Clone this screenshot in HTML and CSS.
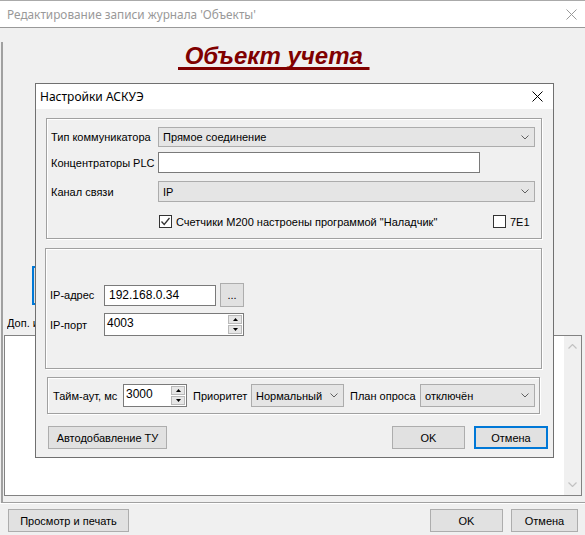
FILE: index.html
```html
<!DOCTYPE html>
<html lang="ru">

<head>
    <meta charset="UTF-8" />
    <title>Редактирование записи журнала 'Объекты'</title>
    <link rel="stylesheet" href="styles.css">
</head>

<body>
    <div class="window">
        <!-- Main window title -->
        <div class="titlebar">
            <span class="title">Редактирование записи журнала 'Объекты'</span>
            <svg class="close close-gray" width="11" height="11" viewBox="0 0 11 11">
                <path d="M0.5 0.5 L10.5 10.5 M10.5 0.5 L0.5 10.5" />
            </svg>
        </div>

        <!-- Form behind the dialog -->
        <div class="panel">
            <h1 class="heading">&nbsp;Объект учета&nbsp;</h1>
            <button class="btn btn-focus btn-hidden"></button>
            <div class="extra-label"><span>Доп. информация</span></div>
            <div class="memo">
                <div class="vscroll">
                    <svg width="9" height="5" viewBox="0 0 9 5"><path d="M0.5 4.5 L4.5 0.5 L8.5 4.5" /></svg>
                    <svg width="9" height="5" viewBox="0 0 9 5"><path d="M0.5 0.5 L4.5 4.5 L8.5 0.5" /></svg>
                </div>
            </div>
        </div>

        <div class="footer">
            <button class="btn btn-print">Просмотр и печать</button>
            <button class="btn btn-ok">OK</button>
            <button class="btn btn-cancel">Отмена</button>
        </div>

        <!-- Dialog -->
        <div class="dialog">
            <div class="dialog-title">
                <span>Настройки АСКУЭ</span>
                <svg class="close" width="11" height="11" viewBox="0 0 11 11">
                    <path d="M0.5 0.5 L10.5 10.5 M10.5 0.5 L0.5 10.5" />
                </svg>
            </div>

            <div class="dialog-body">
                <div class="group group-main">
                    <div class="row row-1">
                        <span class="lbl lbl-main">Тип коммуникатора</span>
                        <div class="combo combo-wide">
                            <span>Прямое соединение</span>
                            <svg class="chevron" width="8" height="5" viewBox="0 0 8 5"><path d="M0.5 0.5 L4 4 L7.5 0.5" /></svg>
                        </div>
                    </div>
                    <div class="row row-2">
                        <span class="lbl lbl-main">Концентраторы PLC</span>
                        <div class="edit edit-plc"></div>
                    </div>
                    <div class="row row-3">
                        <span class="lbl lbl-main">Канал связи</span>
                        <div class="combo combo-wide">
                            <span>IP</span>
                            <svg class="chevron" width="8" height="5" viewBox="0 0 8 5"><path d="M0.5 0.5 L4 4 L7.5 0.5" /></svg>
                        </div>
                    </div>
                    <div class="row row-4">
                        <span class="check checked">
                            <svg width="11" height="11" viewBox="0 0 11 11"><path d="M1.5 5.5 L4.2 8.5 L9.5 2" /></svg>
                        </span>
                        <span class="check-text">Счетчики М200 настроены программой "Наладчик"</span>
                        <span class="check-7e1">
                            <span class="check"></span>
                            <span class="check-text">7E1</span>
                        </span>
                    </div>
                </div>

                <div class="group group-ip">
                    <div class="row row-ip">
                        <span class="lbl lbl-ip">IP-адрес</span>
                        <div class="edit edit-ip">192.168.0.34</div>
                        <button class="btn btn-dots">...</button>
                    </div>
                    <div class="row row-port">
                        <span class="lbl lbl-ip">IP-порт</span>
                        <div class="spin spin-port">
                            <span class="spin-value">4003</span>
                            <span class="spin-btns">
                                <span class="spin-btn"><svg width="5" height="3" viewBox="0 0 5 3"><path d="M2.5 0 L5 3 L0 3 Z" /></svg></span>
                                <span class="spin-btn"><svg width="5" height="3" viewBox="0 0 5 3"><path d="M0 0 L5 0 L2.5 3 Z" /></svg></span>
                            </span>
                        </div>
                    </div>
                </div>

                <div class="group group-poll">
                    <div class="row row-poll">
                        <span class="lbl lbl-timeout">Тайм-аут, мс</span>
                        <div class="spin spin-timeout">
                            <span class="spin-value">3000</span>
                            <span class="spin-btns">
                                <span class="spin-btn"><svg width="5" height="3" viewBox="0 0 5 3"><path d="M2.5 0 L5 3 L0 3 Z" /></svg></span>
                                <span class="spin-btn"><svg width="5" height="3" viewBox="0 0 5 3"><path d="M0 0 L5 0 L2.5 3 Z" /></svg></span>
                            </span>
                        </div>
                        <span class="lbl lbl-prio">Приоритет</span>
                        <div class="combo combo-prio">
                            <span>Нормальный</span>
                            <svg class="chevron" width="8" height="5" viewBox="0 0 8 5"><path d="M0.5 0.5 L4 4 L7.5 0.5" /></svg>
                        </div>
                        <span class="lbl lbl-plan">План опроса</span>
                        <div class="combo combo-plan">
                            <span>отключён</span>
                            <svg class="chevron" width="8" height="5" viewBox="0 0 8 5"><path d="M0.5 0.5 L4 4 L7.5 0.5" /></svg>
                        </div>
                    </div>
                </div>

                <div class="dialog-actions">
                    <button class="btn btn-auto">Автодобавление ТУ</button>
                    <button class="btn btn-dlg-ok">OK</button>
                    <button class="btn btn-focus btn-dlg-cancel">Отмена</button>
                </div>
            </div>
        </div>
    </div>
</body>

</html>
```

FILE: styles.css
```css
* {
    box-sizing: border-box;
    margin: 0;
    padding: 0;
}

body {
    font-family: "Liberation Sans", Arial, sans-serif;
    font-size: 11px;
    color: #000;
    background: #f0f0f0;
}

.window {
    position: relative;
    width: 585px;
    height: 535px;
    overflow: hidden;
    background: #f0f0f0;
}

/* Title bar */
.titlebar {
    height: 28px;
    background: #fff;
    border-top: 1px solid #aaa;
    border-bottom: 1px solid #999;
    display: flex;
    align-items: center;
    justify-content: space-between;
    padding: 0 8px 0 7px;
}

.titlebar .title {
    font-family: "Noto Sans", sans-serif;
    font-size: 11.8px;
    color: #999;
}

.close {
    fill: none;
    stroke: #000;
    stroke-width: 1;
}

.close-gray {
    stroke: #999;
}

/* Panel behind dialog */
.panel {
    margin-left: 1px;
    border-left: 2px solid #a0a0a0;
    border-bottom: 1px solid #a0a0a0;
    padding-bottom: 6px;
}

.heading {
    margin: 14px 0 0 175px;
    font-size: 24px;
    line-height: 28px;
    font-weight: bold;
    font-style: italic;
    color: #800000;
    text-decoration: underline;
    text-decoration-thickness: 3px;
    text-underline-offset: 3px;
    text-decoration-skip-ink: none;
}

.btn {
    display: block;
    font: inherit;
    height: 23px;
    background: #e1e1e1;
    border: 1px solid #adadad;
    color: #000;
}

.btn-focus {
    border: 2px solid #0078d7;
}

.btn-hidden {
    width: 100px;
    height: 39px;
    margin: 196px 0 0 29px;
}

/* only the start of this label shows left of the dialog */
.extra-label {
    margin: 11px 0 0 4px;
    width: 28px;
    line-height: 14px;
    white-space: nowrap;
    overflow: hidden;
}

.memo {
    margin: 5px 0 0 1px;
    width: 578px;
    height: 161px;
    background: #fff;
    border: 1px solid #828282;
    display: flex;
    justify-content: flex-end;
}

.vscroll {
    width: 17px;
    background: #f0f0f0;
    display: flex;
    flex-direction: column;
    justify-content: space-between;
    align-items: center;
    padding: 8px 0;
}

.vscroll svg {
    fill: none;
    stroke: #c2c2c2;
    stroke-width: 1.2;
}

/* Footer */
.footer {
    display: flex;
    border-top: 1px solid #fff;
    padding: 5px 7px 0 8px;
}

.btn-print {
    width: 121px;
}

.btn-ok {
    width: 73px;
    margin-left: auto;
}

.btn-cancel {
    width: 67px;
    margin-left: 8px;
}

/* Dialog */
.dialog {
    position: absolute;
    left: 35px;
    top: 83px;
    width: 519px;
    height: 375px;
    background: #f0f0f0;
    border: 1px solid #707070;
}

.dialog-title {
    height: 25px;
    background: #fff;
    display: flex;
    align-items: center;
    justify-content: space-between;
    padding: 0 10px 0 4px;
    font-family: "Noto Sans", sans-serif;
    font-size: 12px;
}

.dialog-body {
    padding: 9px 5px 8px 10px;
}

.group {
    border: 1px solid #a0a0a0;
    box-shadow: 1px 1px 0 #fff, inset 1px 1px 0 #fff;
}

.group-main {
    width: 496px;
    padding: 8px 6px 9px 4px;
}

.group-ip {
    width: 497px;
    margin: 9px 0 0 -1px;
    padding: 34px 6px 32px 4px;
}

.group-poll {
    width: 493px;
    margin: 8px 0 0 1px;
    padding: 6px 4px 6px 5px;
}

.row {
    display: flex;
    align-items: center;
}

.row-1 {
    height: 20px;
}

.row-2 {
    height: 21px;
    margin-top: 5px;
}

.row-3 {
    height: 21px;
    margin-top: 8px;
}

.row-4 {
    height: 15px;
    margin-top: 12px;
    padding-left: 108px;
}

.lbl-main {
    width: 107px;
}

.combo {
    height: 100%;
    background: #e5e5e5;
    border: 1px solid #acacac;
    display: flex;
    align-items: center;
    justify-content: space-between;
    padding: 0 5px 0 4px;
}

.chevron {
    fill: none;
    stroke: #606060;
    stroke-width: 1;
}

.combo-wide {
    width: 377px;
}

.edit {
    height: 21px;
    background: #fff;
    border: 1px solid #7a7a7a;
    display: flex;
    align-items: center;
    padding: 0 4px;
}

.edit-plc {
    width: 322px;
}

.check {
    width: 13px;
    height: 13px;
    background: #fff;
    border: 1px solid #333;
    display: flex;
    align-items: center;
    justify-content: center;
}

.check svg {
    fill: none;
    stroke: #333;
    stroke-width: 1.3;
}

.check-text {
    margin-left: 4px;
}

.check-7e1 {
    margin-left: auto;
    width: 42px;
    display: flex;
    align-items: center;
}

/* IP group */
.row-ip {
    height: 24px;
}

.row-port {
    height: 23px;
    margin-top: 6px;
}

.lbl-ip {
    width: 54px;
}

.edit-ip {
    width: 112px;
    font-size: 12px;
}

.btn-dots {
    width: 24px;
    height: 24px;
    margin-left: 4px;
}

.spin {
    height: 23px;
    display: flex;
    background: #fff;
    border: 1px solid #7a7a7a;
}

.spin-value {
    flex: 1;
    padding: 2px 0 0 2px;
    font-size: 12px;
}

.spin-btns {
    display: flex;
    flex-direction: column;
    justify-content: center;
    gap: 1px;
    padding-right: 1px;
}

.spin-btn {
    width: 14px;
    height: 9px;
    background: #e6e6e6;
    border: 1px solid #b9b9b9;
    display: flex;
    align-items: center;
    justify-content: center;
}

.spin-btn svg {
    fill: #000;
}

.spin-port {
    width: 140px;
}

/* Poll group */
.row-poll {
    height: 23px;
}

.lbl-timeout {
    width: 70px;
}

.spin-timeout {
    width: 64px;
}

.lbl-prio {
    width: 58px;
    margin-left: 6px;
}

.combo-prio {
    width: 93px;
}

.lbl-plan {
    width: 70px;
    margin-left: 6px;
}

.combo-plan {
    width: 115px;
}

/* Dialog buttons */
.dialog-actions {
    display: flex;
    margin-top: 12px;
}

.btn-auto {
    width: 119px;
    margin-left: 2px;
}

.btn-dlg-ok {
    width: 73px;
    margin-left: auto;
}

.btn-dlg-cancel {
    width: 74px;
    margin-left: 9px;
}
```
